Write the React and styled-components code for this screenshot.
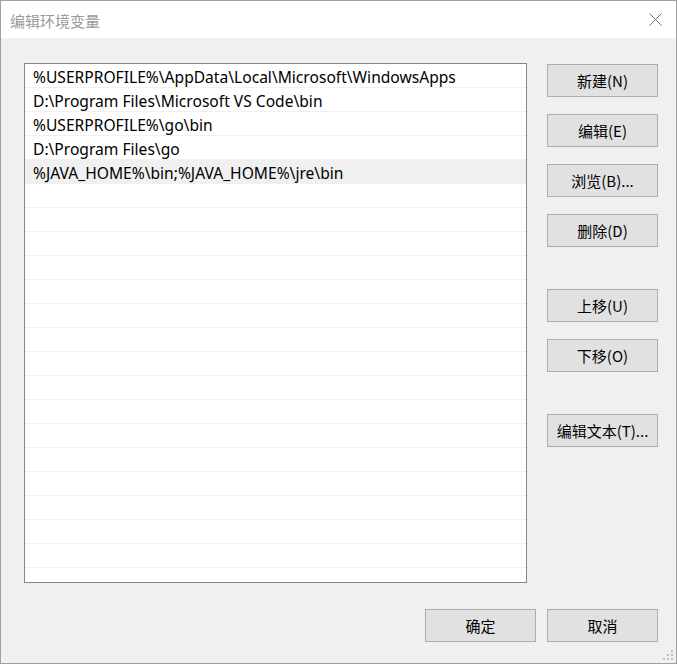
import React from "react";
import styled, { createGlobalStyle } from "styled-components";

const GlobalStyle = createGlobalStyle`
  html, body {
    margin: 0;
    padding: 0;
    background: #ffffff;
  }
  * {
    box-sizing: border-box;
  }
`;

const FONT = `"Noto Sans", "Noto Sans CJK SC", sans-serif`;

const paths = [
  "%USERPROFILE%\\AppData\\Local\\Microsoft\\WindowsApps",
  "D:\\Program Files\\Microsoft VS Code\\bin",
  "%USERPROFILE%\\go\\bin",
  "D:\\Program Files\\go",
  "%JAVA_HOME%\\bin;%JAVA_HOME%\\jre\\bin",
];

const Window = styled.div`
  width: 677px;
  height: 664px;
  border: 1px solid #a0a0a0;
  display: flex;
  flex-direction: column;
  font-family: ${FONT};
  position: relative;
  overflow: hidden;
`;

const TitleBar = styled.div`
  height: 37px;
  background: #ffffff;
  display: flex;
  align-items: center;
  justify-content: space-between;
  padding: 0 14px 0 9px;
`;

const Title = styled.div`
  font-family: "Noto Sans CJK SC", sans-serif;
  font-size: 15px;
  color: #9a9a9a;
  padding-top: 1px;
`;

const Close = styled.div`
  width: 14px;
  height: 14px;
  display: flex;
  align-items: center;
  justify-content: center;
`;

const Body = styled.div`
  flex: 1;
  background: #f0f0f0;
  padding: 25px 18px 0 23px;
  display: flex;
  flex-direction: column;
`;

const Main = styled.div`
  display: flex;
  gap: 20px;
`;

const List = styled.div`
  width: 504px;
  height: 520px;
  border: 1px solid #828790;
  background: #ffffff;
  overflow: hidden;
`;

const Row = styled.div`
  height: 24px;
  border-bottom: 1px solid #f0f0f0;
  background: ${(p) => (p.$selected ? "#f0f0f0" : "#ffffff")};
  padding: 3px 0 0 8px;
  display: flex;
  align-items: center;
  font-size: 15.6px;
  color: #000000;
  white-space: nowrap;
`;

const Side = styled.div`
  display: flex;
  flex-direction: column;
  padding-top: 1px;
`;

const Button = styled.div`
  width: 111px;
  height: 33px;
  margin-top: ${(p) => p.$gap || 0}px;
  background: #e1e1e1;
  border: 1px solid #adadad;
  display: flex;
  align-items: center;
  justify-content: center;
  padding-bottom: 1px;
  font-family: "Noto Sans CJK SC", sans-serif;
  font-size: 15px;
  color: #000000;
`;

const Footer = styled.div`
  display: flex;
  justify-content: flex-end;
  gap: 11px;
  margin-top: 26px;
`;

const Grip = styled.svg`
  position: absolute;
  right: 1px;
  bottom: 1px;
`;

export default function App() {
  const rows = [];
  for (let i = 0; i < 22; i++) {
    rows.push(
      <Row key={i} $selected={i === 4}>
        {paths[i] || ""}
      </Row>
    );
  }
  return (
    <>
      <GlobalStyle />
      <Window>
        <TitleBar>
          <Title>编辑环境变量</Title>
          <Close>
            <svg width="13" height="13" viewBox="0 0 13 13">
              <path d="M0.5 0.5 L12.5 12.5 M12.5 0.5 L0.5 12.5" stroke="#707070" strokeWidth="1" />
            </svg>
          </Close>
        </TitleBar>
        <Body>
          <Main>
            <List>{rows}</List>
            <Side>
              <Button>新建(N)</Button>
              <Button $gap={17}>编辑(E)</Button>
              <Button $gap={17}>浏览(B)...</Button>
              <Button $gap={17}>删除(D)</Button>
              <Button $gap={42}>上移(U)</Button>
              <Button $gap={17}>下移(O)</Button>
              <Button $gap={42}>编辑文本(T)...</Button>
            </Side>
          </Main>
          <Footer>
            <Button>确定</Button>
            <Button>取消</Button>
          </Footer>
        </Body>
        <Grip width="12" height="12" viewBox="0 0 12 12">
          <g fill="#c0c0c0">
            <rect x="8" y="0" width="2" height="2" />
            <rect x="4" y="4" width="2" height="2" />
            <rect x="8" y="4" width="2" height="2" />
            <rect x="0" y="8" width="2" height="2" />
            <rect x="4" y="8" width="2" height="2" />
            <rect x="8" y="8" width="2" height="2" />
          </g>
        </Grip>
      </Window>
    </>
  );
}
